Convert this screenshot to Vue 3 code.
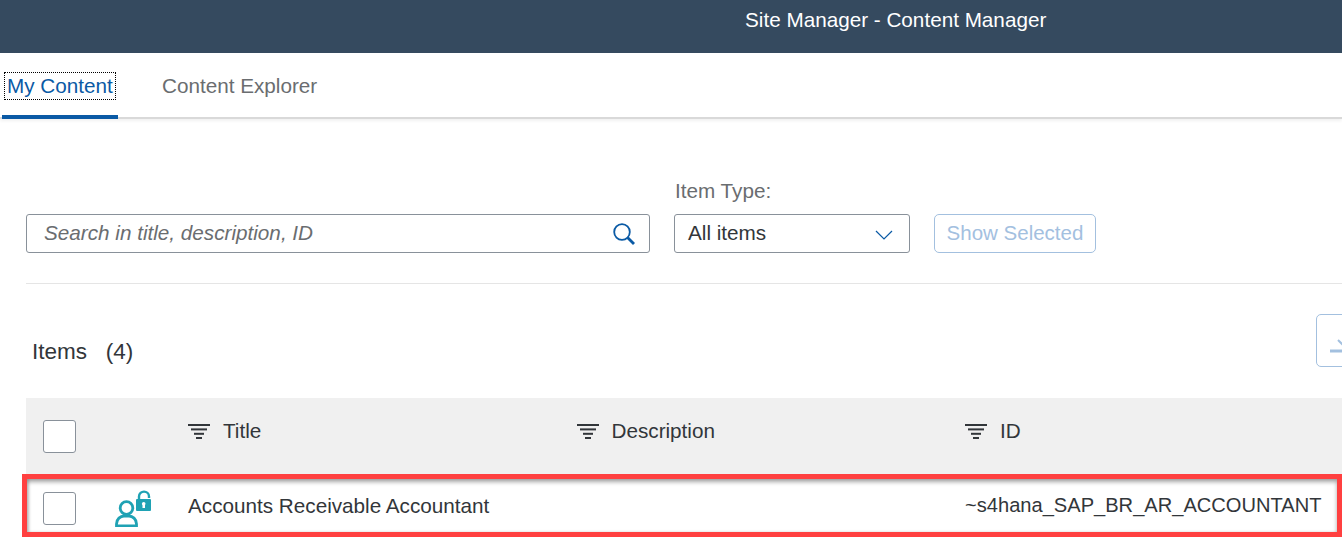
<script setup>
const columns = ["Title", "Description", "ID"];
</script>

<template>
  <div class="page">
    <header class="shell">Site Manager - Content Manager</header>

    <nav class="tabs">
      <div class="tab active"><span class="tab-label">My Content</span></div>
      <div class="tab">Content Explorer</div>
    </nav>

    <section class="filters">
      <div class="search">
        <span>Search in title, description, ID</span>
        <svg width="24" height="24" viewBox="0 0 24 24" fill="none">
          <circle cx="10" cy="10" r="7.8" stroke="#0a5aa5" stroke-width="1.8" />
          <path d="M15.5 15.5l6.5 6.5" stroke="#0a5aa5" stroke-width="2.8" />
        </svg>
      </div>
      <div class="type-field">
        <label>Item Type:</label>
        <div class="select">
          <span>All items</span>
          <svg width="18" height="10" viewBox="0 0 18 10" fill="none">
            <path d="M1 1l8 8 8-8" stroke="#0a5aa5" stroke-width="1.2" />
          </svg>
        </div>
      </div>
      <button class="show-selected">Show Selected</button>
    </section>

    <div class="divider"></div>

    <div class="items-bar">
      <h2>Items&nbsp;&nbsp; (4)</h2>
      <div class="import-btn">
        <svg width="26" height="26" viewBox="0 0 26 26" fill="none">
          <path d="M0 22h26" stroke="#a3c0df" stroke-width="3" />
          <path d="M8 11l7 7" stroke="#a3c0df" stroke-width="2" />
        </svg>
      </div>
    </div>

    <div class="table">
      <div class="row head">
        <div class="cb-cell"><span class="checkbox"></span></div>
        <div class="icon-cell"></div>
        <div v-for="col in columns" :key="col" class="col">
          <svg width="22" height="15" viewBox="0 0 22 15" fill="#32363a">
            <rect x="0" y="0" width="22" height="2" />
            <rect x="3" y="4.4" width="16" height="2" />
            <rect x="6" y="8.8" width="10" height="2" />
            <rect x="8" y="13" width="6" height="2" />
          </svg>
          <span>{{ col }}</span>
        </div>
      </div>
      <div class="row body">
        <div class="cb-cell"><span class="checkbox"></span></div>
        <div class="icon-cell">
          <svg width="38" height="37" viewBox="0 0 38 37" fill="none">
            <circle cx="12.500" cy="18" r="6.300" stroke="#1fa2b4" stroke-width="2.800" />
            <path d="M2.500 36v-2c0-5 4-8 7.500-8h5c3.500 0 7.500 3 7.500 8v2z" stroke="#1fa2b4" stroke-width="2.800" />
            <path d="M25 10V6.500c0-6.500 10-6.500 10 0V8" stroke="#1fa2b4" stroke-width="2.400" />
            <rect x="22" y="9" width="15" height="12" rx="1" fill="#1fa2b4" />
            <rect x="28.500" y="13" width="2.500" height="5" fill="#fff" />
            <circle cx="29.700" cy="13.800" r="1.800" fill="#fff" />
          </svg>
        </div>
        <div class="col">Accounts Receivable Accountant</div>
        <div class="col"></div>
        <div class="col id-text">~s4hana_SAP_BR_AR_ACCOUNTANT</div>
      </div>
    </div>

    <div class="highlight"></div>
  </div>
</template>

<style scoped>
.page {
  position: relative;
  width: 1342px;
  height: 537px;
  overflow: hidden;
  background: #fff;
  color: #32363a;
  font-family: "Liberation Sans", Arial, sans-serif;
  font-size: 20.7px;
}
.shell {
  height: 53px;
  box-sizing: border-box;
  padding: 6px 0 0 745px;
  background: #354a5f;
  color: #fff;
  line-height: 27px;
}
.tabs {
  display: flex;
  height: 66px;
  box-sizing: border-box;
  padding-left: 2px;
  gap: 44px;
  border-bottom: 2px solid #d9d9d9;
  box-shadow: 0 2px 3px rgba(0, 0, 0, 0.06);
}
.tab {
  height: 66px;
  box-sizing: border-box;
  padding-top: 19px;
  color: #6a6d70;
  line-height: 28px;
}
.tab.active {
  width: 116px;
  color: #0a5aa5;
  padding: 20px 0 0 3px;
  border-bottom: 4px solid #0a5aa5;
}
.tab-label {
  display: block;
  width: 110px;
  height: 26px;
  box-sizing: border-box;
  line-height: 25px;
  padding-left: 2px;
  outline: 1px dotted #000;
  white-space: nowrap;
}
.filters {
  display: flex;
  align-items: flex-end;
  padding: 60px 0 0 26px;
  height: 134px;
  box-sizing: border-box;
}
.search {
  display: flex;
  align-items: center;
  justify-content: space-between;
  width: 624px;
  height: 39px;
  box-sizing: border-box;
  margin-right: 24px;
  padding: 0 13px 2px 17px;
  border: 1px solid #89919a;
  border-radius: 3px;
  color: #6a6d70;
  font-style: italic;
}
.search svg {
  margin-top: 2px;
}
.type-field label {
  display: block;
  color: #6a6d70;
  line-height: 28px;
  margin-bottom: 9px;
  margin-left: 1px;
}
.select {
  display: flex;
  align-items: center;
  justify-content: space-between;
  width: 236px;
  height: 39px;
  box-sizing: border-box;
  padding: 0 16px 2px 13px;
  border: 1px solid #89919a;
  border-radius: 3px;
}
.select svg {
  margin-top: 4px;
}
.show-selected {
  width: 162px;
  height: 39px;
  margin-left: 24px;
  padding: 0 0 2px;
  background: #fff;
  border: 1px solid #a3c0df;
  border-radius: 5px;
  color: #a3c0df;
  font: inherit;
  font-size: 20.5px;
}
.divider {
  height: 1px;
  margin: 30px 0 0 26px;
  background: #e5e5e5;
}
.items-bar {
  display: flex;
  justify-content: space-between;
  align-items: flex-start;
  height: 114px;
  box-sizing: border-box;
  padding: 30px 0 0 32px;
}
.items-bar h2 {
  margin: 23px 0 0;
  font-size: 22.5px;
  line-height: 30px;
  font-weight: 400;
}
.import-btn {
  width: 60px;
  height: 53px;
  box-sizing: border-box;
  flex: none;
  margin-right: -34px;
  padding: 14px 0 0 13px;
  border: 1px solid #a3c0df;
  border-radius: 5px;
}
.table {
  width: 1316px;
  margin-left: 26px;
}
.row {
  display: flex;
  align-items: center;
}
.row.head {
  height: 76px;
  background: #f0f0f0;
}
.row.body {
  height: 63px;
}
.cb-cell {
  flex: none;
  width: 85px;
  padding-left: 17px;
  box-sizing: border-box;
  display: flex;
}
.checkbox {
  width: 33px;
  height: 33px;
  box-sizing: border-box;
  background: #fff;
  border: 1px solid #89919a;
  border-radius: 3px;
}
.icon-cell {
  flex: none;
  width: 77px;
  box-sizing: border-box;
  padding-left: 3px;
  display: flex;
}
.row.body .cb-cell,
.row.body .icon-cell {
  margin-top: 6px;
}
.col {
  flex: none;
  width: 388.5px;
  display: flex;
  align-items: center;
  gap: 13px;
  white-space: nowrap;
}
.row.head .col {
  margin-bottom: 10px;
}
.id-text {
  font-size: 20.1px;
}
.highlight {
  position: absolute;
  left: 22px;
  top: 474px;
  right: 0;
  height: 63px;
  box-sizing: border-box;
  border: 5px solid #ff4040;
  box-shadow: inset 0 3px 4px rgba(0, 0, 0, 0.35), inset 2px 0 3px rgba(0, 0, 0, 0.15);
}
</style>
